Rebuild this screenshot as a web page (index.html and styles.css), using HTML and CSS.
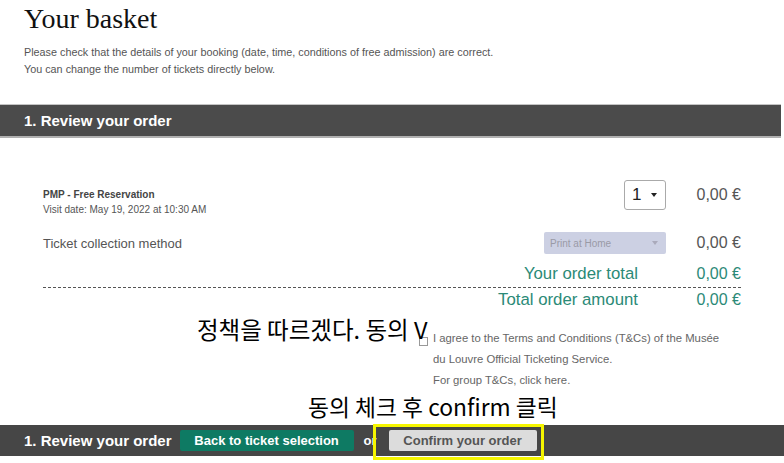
FILE: index.html
```html
<!DOCTYPE html>
<html lang="en">
<head>
<meta charset="utf-8">
<title>Your basket</title>
<link rel="stylesheet" href="styles.css">
</head>
<body>
<header class="intro">
  <h1 class="title">Your basket</h1>
  <p class="lead">Please check that the details of your booking (date, time, conditions of free admission) are correct.<br>You can change the number of tickets directly below.</p>
</header>

<div class="bar bar-top"><span class="bar-title">1. Review your order</span></div>

<section class="order">
  <div class="row row-item">
    <div class="item-info">
      <div class="item-name">PMP - Free Reservation</div>
      <div class="item-date">Visit date: May 19, 2022 at 10:30 AM</div>
    </div>
    <div class="qty"><span class="qty-val">1</span><span class="caret"></span></div>
    <div class="price price-item">0,00 €</div>
  </div>
  <div class="row row-collect">
    <div class="collect-label">Ticket collection method</div>
    <div class="method"><span>Print at Home</span><span class="caret caret-light"></span></div>
    <div class="price">0,00 €</div>
  </div>
  <div class="total total-sub">
    <span class="total-label">Your order total</span>
    <span class="total-price">0,00 €</span>
  </div>
  <div class="total total-all">
    <span class="total-label">Total order amount</span>
    <span class="total-price">0,00 €</span>
  </div>
</section>

<section class="agree">
  <span class="note note-agree">정책을 따르겠다. 동의 V</span>
  <span class="check"></span>
  <div class="agree-text">
    <div>I agree to the Terms and Conditions (T&amp;Cs) of the Musée</div>
    <div>du Louvre Official Ticketing Service.</div>
    <div>For group T&amp;Cs, click here.</div>
  </div>
</section>

<div class="note note-confirm">동의 체크 후 confirm 클릭</div>

<div class="bar bar-bottom">
  <span class="bar-title">1. Review your order</span>
  <span class="btn btn-back">Back to ticket selection</span>
  <span class="or">or</span>
  <span class="confirm-wrap"><span class="btn btn-confirm">Confirm your order</span><span class="highlight"></span></span>
</div>
</body>
</html>
```

FILE: styles.css
```css
html, body {
  margin: 0;
  padding: 0;
  background: #fff;
}
body {
  width: 784px;
  height: 463px;
  overflow: hidden;
  font-family: "Liberation Sans", Arial, sans-serif;
  color: #555;
}
.intro {
  padding: 4px 24px 0;
}
.title {
  margin: 0;
  font-family: "Liberation Serif", "DejaVu Serif", serif;
  font-weight: normal;
  font-size: 28px;
  line-height: 30px;
  color: #111;
}
.lead {
  margin: 10px 0 0;
  font-size: 10.8px;
  line-height: 17px;
  color: #555;
}
.bar {
  width: 781px;
  box-sizing: border-box;
  background: #4b4b4b;
  display: flex;
  align-items: center;
  padding-left: 24px;
}
.bar-top {
  margin-top: 26px;
  height: 34px;
  border-top: 1px solid #c4c4c4;
  border-bottom: 2px solid #b0b0b0;
}
.bar-title {
  color: #fff;
  font-weight: bold;
  font-size: 15px;
}
.order {
  padding: 42px 43px 0;
}
.row {
  display: grid;
  grid-template-columns: 1fr auto 46px;
  column-gap: 29px;
  align-items: center;
}
.row-item {
  align-items: start;
}
.item-info {
  font-size: 10px;
  line-height: 15px;
  margin-top: 7px;
}
.item-name {
  font-weight: bold;
  color: #444;
}
.item-date {
  color: #555;
}
.qty {
  width: 42px;
  height: 30px;
  box-sizing: border-box;
  border: 1px solid #aaa;
  border-radius: 3px;
  display: flex;
  align-items: center;
  justify-content: space-between;
  padding: 0 8px 0 7px;
  font-size: 17px;
  color: #222;
}
.caret {
  width: 0;
  height: 0;
  border-left: 3px solid transparent;
  border-right: 3px solid transparent;
  border-top: 4px solid #222;
}
.caret-light {
  border-top-color: #aab;
}
.price {
  font-size: 16px;
  color: #555;
  text-align: right;
  white-space: nowrap;
}
.price-item {
  line-height: 29px;
}
.row-collect {
  margin-top: 15px;
  height: 22px;
}
.collect-label {
  font-size: 13px;
  color: #555;
}
.method {
  width: 122px;
  height: 22px;
  box-sizing: border-box;
  background: #ccd0e3;
  border-radius: 2px;
  display: flex;
  align-items: center;
  justify-content: space-between;
  padding: 0 8px 0 6px;
  font-size: 10px;
  color: #9a9aa6;
}
.total {
  display: flex;
  justify-content: flex-end;
  align-items: center;
  color: #2b8a77;
  font-size: 16.8px;
  height: 22px;
}
.total-price {
  width: 46px;
  margin-left: 57px;
  text-align: right;
  font-size: 16px;
}
.total-sub {
  margin-top: 9px;
  border-bottom: 1px dashed #555;
  padding-bottom: 2px;
}
.total-all {
  margin-top: 1px;
}
.agree {
  position: relative;
  display: flex;
  align-items: flex-start;
  padding-left: 419px;
  margin-top: 20px;
}
.note {
  font-family: "Noto Sans CJK KR", "Noto Sans", sans-serif;
  color: #000;
  font-weight: normal;
  line-height: 28px;
}
.note-agree {
  position: absolute;
  left: 197px;
  top: -16px;
  font-size: 23.5px;
  white-space: nowrap;
}
.check {
  width: 7px;
  height: 7px;
  border: 1px solid #999;
  background: #fff;
  margin-top: 6px;
  flex: none;
}
.agree-text {
  margin-left: 5px;
  font-size: 11.3px;
  line-height: 21px;
  color: #666;
  margin-top: -3px;
}
.note-confirm {
  padding-left: 308px;
  margin-top: 2px;
  font-size: 22.8px;
  height: 28px;
}
.bar-bottom {
  margin-top: 4px;
  height: 31px;
  background: #464646;
  width: 784px;
}
.btn {
  font-weight: bold;
  font-size: 13px;
  height: 21px;
  line-height: 21px;
  box-sizing: border-box;
  border-radius: 2px;
  display: inline-block;
}
.btn-back {
  margin-left: 8px;
  background: #0e7a63;
  color: #fff;
  width: 174px;
  text-align: center;
}
.or {
  margin-left: 10px;
  color: #fff;
  font-weight: bold;
  font-size: 13px;
}
.confirm-wrap {
  position: relative;
  margin-left: 12px;
  display: inline-block;
}
.btn-confirm {
  background: #dcdcdc;
  color: #555;
  width: 148px;
  text-align: center;
}
.highlight {
  position: absolute;
  left: -16px;
  top: -6px;
  right: -7px;
  bottom: -9px;
  border: 3px solid #f5f500;
}
```
